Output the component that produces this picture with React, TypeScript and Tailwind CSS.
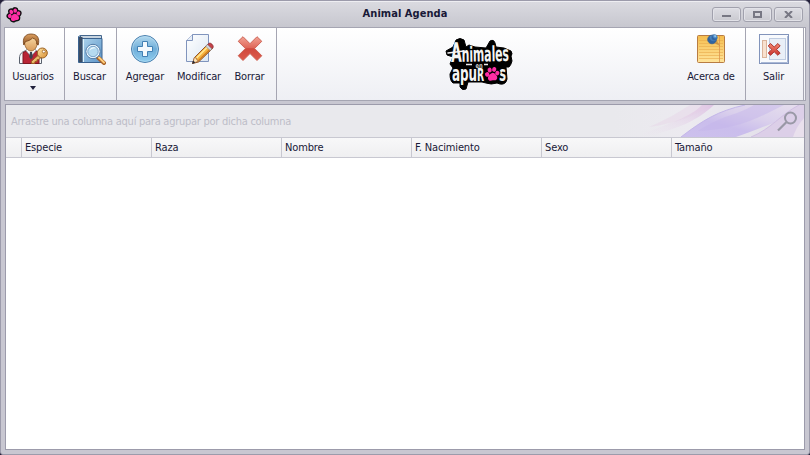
import type { ReactNode } from "react";

const PAW = (
  <>
    <ellipse cx="3.2" cy="8" rx="2.2" ry="2.3" transform="rotate(-25 3.2 8)" />
    <ellipse cx="6" cy="3.900" rx="2.100" ry="2.500" transform="rotate(-8 6 3.9)" />
    <ellipse cx="10.600" cy="3.600" rx="2.100" ry="2.500" transform="rotate(18 10.6 3.6)" />
    <ellipse cx="13.400" cy="7.500" rx="2.100" ry="2.300" transform="rotate(30 13.4 7.5)" />
    <path d="M8.300 6.900c2 0 2.800 1.500 3.800 2.800 1.400 1.500 1 4.400-1 4.800-1.300.2-1.800-.2-2.800-.1-1.200.1-2 .6-3.300 0-2-.9-1.700-3.400-.5-4.700C5.600 8.500 6.400 6.900 8.300 6.900z" />
  </>
);

function UsersIcon() {
  return (
    <svg width="32" height="32" viewBox="-1 0 32 32">
      <defs>
        <linearGradient id="face" x1="0" y1="0" x2="0" y2="1"><stop stopColor="#fbe0ad" /><stop offset="1" stopColor="#d99a58" /></linearGradient>
        <linearGradient id="hair" x1="0" y1="0" x2="0" y2="1"><stop stopColor="#dda060" /><stop offset="1" stopColor="#8d5323" /></linearGradient>
        <linearGradient id="key" x1="0" y1="0" x2="1" y2="1"><stop stopColor="#ffe7a6" /><stop offset="1" stopColor="#d78d32" /></linearGradient>
      </defs>
      <path d="M1.500 30.500V25c0-4 2.500-6.500 7-7.500h8c4.500 1 7 3.500 7 7.500v5.500z" fill="#f5f7fa" stroke="#59616d" />
      <path d="M5 30.500V19.700l3.500-1.900 4.500 6 4.500-6 3.500 1.900v10.800z" fill="#b82435" stroke="#7e1722" />
      <path d="M8 17.500l5 6 5-6-1-2H9z" fill="#fff" stroke="#8b95a2" strokeWidth=".8" />
      <path d="M12 19h2l.8 5-1.800 2.500-1.800-2.500z" fill="#3c4450" />
      <path d="M6.500 8c0-4 2.500-6 6.500-6s6.500 2.500 6.500 6.500c0 5-2.800 9.500-6.500 9.500s-6.500-4.500-6.500-9z" fill="url(#face)" stroke="#9c6632" strokeWidth=".9" />
      <path d="M5.800 12C4.300 6 6.500 1 13 1s9 4.500 7.200 11l-1.500-1c.3-3-1-5-4.200-6-2.100 2.200-4.500 3-7 3.500z" fill="url(#hair)" stroke="#754118" strokeWidth=".8" />
      <path d="M21.500 21.200l-8 7 .2 2.300 3-.1.300-1.800 1.900-.1.200-1.800 1.800-.1 2.500-2.600z" fill="url(#key)" stroke="#9b6020" />
      <circle cx="24.300" cy="20" r="5" fill="url(#key)" stroke="#9b6020" />
      <circle cx="25.800" cy="18.500" r="1.500" fill="#fff" stroke="#9b6020" strokeWidth=".8" />
    </svg>
  );
}

function SearchIcon() {
  return (
    <svg width="32" height="32" viewBox="-1 0 32 32">
      <defs>
        <linearGradient id="book" x1="0" y1="0" x2="1" y2="1"><stop stopColor="#b9dcf1" /><stop offset="1" stopColor="#5b94c8" /></linearGradient>
      </defs>
      <path d="M5.500 2.500h21v3h-21z" fill="#f6fafd" stroke="#45678d" />
      <path d="M6 4h20" stroke="#98aec2" />
      <path d="M3.500 3.500l2-1v3h21.500v24H3.500z" fill="url(#book)" stroke="#3a628f" />
      <path d="M4 4h3.500v25H4z" fill="#3c4d65" />
      <path d="M8.500 6v23" stroke="#e0f3fc" />
      <path d="M23 24.500l6 5.500" stroke="#a76127" strokeWidth="4" strokeLinecap="round" />
      <path d="M24 24.500l5 5" stroke="#ffcd7b" strokeWidth="2" strokeLinecap="round" />
      <circle cx="18" cy="18.500" r="7.200" fill="#edf8ff" stroke="#527aa5" />
      <circle cx="18" cy="18.500" r="5.200" fill="#b5daf0" stroke="#7ba5ca" />
      <path d="M14.500 18c.3-4 5-5 6.800-2.500C18 15 16 16 14.500 18z" fill="#f4fcff" />
    </svg>
  );
}

function AddIcon() {
  return (
    <svg width="32" height="32" viewBox="0 0 32 32">
      <defs>
        <linearGradient id="add" x1="0" y1="0" x2="0" y2="1"><stop stopColor="#b4daef" /><stop offset=".5" stopColor="#70aed9" /><stop offset="1" stopColor="#8fcef0" /></linearGradient>
      </defs>
      <circle cx="16" cy="16" r="13.500" fill="url(#add)" stroke="#4a7fae" />
      <circle cx="16" cy="16" r="12.500" fill="none" stroke="#b9def1" strokeOpacity=".6" />
      <path d="M13.500 8.500h5v5h5v5h-5v5h-5v-5h-5v-5h5z" fill="#f3f9fd" stroke="#4180b4" strokeLinejoin="round" />
    </svg>
  );
}

function EditIcon() {
  return (
    <svg width="32" height="32" viewBox="0 0 32 32">
      <defs>
        <linearGradient id="paper" x1="0" y1="0" x2="1" y2="1"><stop stopColor="#fff" /><stop offset="1" stopColor="#dbe6f2" /></linearGradient>
      </defs>
      <path d="M9.500 1.500h16v27h-22V7.500z" fill="url(#paper)" stroke="#8094bd" />
      <path d="M9.500 1.500v6h-6" fill="#e7eef7" stroke="#8094bd" />
      <path d="M9.500 30.500l2-6L25 11l4.500 4.500L15.500 29z" fill="#f6b13d" stroke="#8e552e" />
      <path d="M13 24.500L25.500 12l1.200 1L14.200 25.600z" fill="#ffe693" />
      <path d="M15 27.300L28 14.500l1 1L16 28z" fill="#cc7b20" />
      <path d="M24.500 11.500l1.700-1.300c1.500-.6 4.500 2 4 4l-1.700 1.900z" fill="#c5424a" stroke="#8c3435" strokeWidth=".8" />
      <path d="M22.700 13.200l1.700-1.700 4.400 4.500-1.600 1.500z" fill="#d6d9df" stroke="#838792" strokeWidth=".6" />
      <path d="M9.500 30.500l1.900-6 1.900.7.700 1.900 1.700.9z" fill="#ffe3b3" stroke="#8e552e" strokeWidth=".6" />
      <path d="M9.200 30.900l.9-3.300 2.200 1.900z" fill="#252936" />
    </svg>
  );
}

function DeleteIcon() {
  return (
    <svg width="32" height="32" viewBox="0 0 32 32">
      <defs>
        <linearGradient id="del" x1="0" y1="0" x2="0" y2="1"><stop stopColor="#f2a394" /><stop offset=".48" stopColor="#df6658" /><stop offset=".5" stopColor="#cf493d" /><stop offset="1" stopColor="#dd5a4b" /></linearGradient>
      </defs>
      <path d="M9 3.700l7 7 7-7 4.800 4.600-7.200 7.200 7.200 7.200-4.800 4.800-7-7-7 7-4.800-4.800 7.200-7.200-7.200-7.200z" fill="url(#del)" stroke="#cd6254" strokeLinejoin="round" />
    </svg>
  );
}

function AboutIcon() {
  return (
    <svg width="32" height="32" viewBox="0 0 32 32">
      <defs>
        <linearGradient id="note" x1="0" y1="0" x2="0" y2="1"><stop stopColor="#f5bd4d" /><stop offset="1" stopColor="#ffe49b" /></linearGradient>
        <radialGradient id="pin" cx=".65" cy=".25"><stop stopColor="#c6ebfd" /><stop offset=".4" stopColor="#5f9fd8" /><stop offset="1" stopColor="#2f64a2" /></radialGradient>
      </defs>
      <rect x="2.500" y="2.500" width="27" height="27" rx="1" fill="url(#note)" stroke="#b87c43" />
      <path d="M4 7.500h24M4 10.500h24M4 13.500h24M4 16.500h24M4 19.500h24M4 22.500h24M4 25.500h24" stroke="#e9ad4e" strokeOpacity=".65" />
      <path d="M24.500 3v26" stroke="#dc944e" strokeWidth=".8" />
      <path d="M17 9l8 4-5-9z" fill="#a76722" opacity=".45" />
      <circle cx="17" cy="6.500" r="4.300" fill="url(#pin)" stroke="#365f91" strokeWidth=".8" />
      <circle cx="19.300" cy="4.500" r="3" fill="url(#pin)" stroke="#4679ae" strokeWidth=".6" />
    </svg>
  );
}

function ExitIcon() {
  return (
    <svg width="32" height="32" viewBox="0 0 32 32">
      <defs>
        <linearGradient id="exit" x1="0" y1="0" x2="0" y2="1"><stop stopColor="#f58b73" /><stop offset="1" stopColor="#c82f2c" /></linearGradient>
      </defs>
      <rect x="1.500" y="1.500" width="29" height="29" fill="#f8fafd" stroke="#8294bb" />
      <path d="M3 29.500h26.500V3" fill="none" stroke="#a9b8d6" />
      <rect x="11.500" y="5.500" width="16" height="21" fill="#e9eff7" stroke="#bfcce1" />
      <rect x="4.500" y="7.500" width="4" height="17" fill="#f8e1cf" stroke="#dab49b" />
      <path d="M12.500 10.500l3.700 3.500 3.700-3.500 2.300 2.500-3.700 3.500 3.700 3.500-2.300 2.300-3.700-3.500-3.700 3.500-2.300-2.300 3.700-3.500-3.700-3.500z" fill="url(#exit)" stroke="#ac3630" strokeLinejoin="round" />
    </svg>
  );
}

function Logo() {
  return (
    <svg width="71" height="56" viewBox="0 0 71 56" className="font-['DejaVu_Sans_Condensed','DejaVu_Sans',sans-serif] font-bold">
      <path
        d="M2 15L9 11L12 4Q16 1 20 4L22 11L25 9L31 11L42 12L46 5Q50 3 51 7L52 11L60 12L67 15Q69 18 67 20L68 25Q67 29 65 31L62 31L63 43Q62 49 56 48L53 47Q47 49 42 47L38 46L24 46L22 53Q18 55 16 51L16 47L9 47Q6 45 6 38L9 32L6 28L9 21L3 19z"
        fill="#000" stroke="#000" strokeWidth="1" strokeLinejoin="round"
      />
      <path d="M4 17l16-2" stroke="#f4f4f4" strokeWidth="1.600" strokeLinecap="round" />
      <path d="M22 28.500h6M40 28.500h4" stroke="#e8e8ea" strokeWidth="1.500" />
      <g fill="#f4f4f4">
        <text x="7" y="26" fontSize="21" textLength="58" lengthAdjust="spacingAndGlyphs" transform="rotate(-1 6 26)"><tspan fontSize="27">A</tspan>nimales</text>
        <text x="31.500" y="31.500" fontSize="7" textLength="7" lengthAdjust="spacingAndGlyphs" fill="#c8c8c8">en</text>
        <text x="8" y="45" fontSize="22" textLength="32" lengthAdjust="spacingAndGlyphs">apu<tspan fontSize="17">R</tspan></text>
        <text x="55" y="44.500" fontSize="22" textLength="7" lengthAdjust="spacingAndGlyphs">s</text>
      </g>
      <g transform="translate(40 30) rotate(-5 8 8)">
        <g fill="#000" stroke="#000" strokeWidth="2">{PAW}</g>
        <g fill="#ff2ea6">{PAW}</g>
      </g>
    </svg>
  );
}

function RibbonButton({ icon, label, width, menu }: { icon: ReactNode; label: string; width: string; menu?: boolean }) {
  return (
    <button className={`flex h-full ${width} shrink-0 flex-col items-center pt-[5px]`}>
      {icon}
      <span className="mt-1 h-4 whitespace-nowrap leading-4">{label}</span>
      {menu && (
        <svg width="6" height="4" viewBox="0 0 6 4" className="mt-[1px]"><path d="M0 0h6L3 4z" fill="#20203c" /></svg>
      )}
    </button>
  );
}

function WindowButton({ children }: { children: ReactNode }) {
  return (
    <button className="flex h-[15px] w-[29px] items-center justify-center rounded-[3px] border border-[#a1a1ad] bg-linear-to-b from-[#dedee4] to-[#c9c9d0] shadow-[inset_0_0_0_1px_#e2e2e8]">
      {children}
    </button>
  );
}

const group = "flex h-full border-r border-[#a5a5b2]";
const columns = ["Especie", "Raza", "Nombre", "F. Nacimiento", "Sexo", "Tamaño"];

export default function App() {
  return (
    <div className="h-[455px] w-[810px] overflow-hidden bg-[#24213a] font-['DejaVu_Sans_Condensed','DejaVu_Sans',sans-serif] text-[11px] tracking-[-0.15px] text-[#191937]">
      <div className="flex h-full flex-col rounded-t-[6px] rounded-b-[3px] border border-[#9c9bab] bg-[#c8c7d1] px-[3px] pb-1">
        <header className="-mx-[3px] flex h-[26px] shrink-0 items-center rounded-t-[5px] border-t border-[#eeeef2] bg-linear-to-b from-[#dadae0] to-[#c7c7cf] px-[5px]">
          <div className="w-[94px]">
            <svg width="16" height="16" viewBox="0 0 16 16" className="overflow-visible">
              <g transform="rotate(-14 8 8) translate(.9 .9) scale(.88)">
                <g fill="#101010" stroke="#101010" strokeWidth="3">{PAW}</g>
                <g fill="#ff2ea6">{PAW}</g>
              </g>
            </svg>
          </div>
          <h1 className="flex-1 text-center text-[11px] font-bold tracking-[0.05px]">Animal Agenda</h1>
          <div className="flex w-[94px] justify-end gap-[2px] pb-[1px] pr-[1px]">
            <WindowButton><span className="mt-[4px] h-[2px] w-[9px] bg-[#777783]" /></WindowButton>
            <WindowButton><span className="h-[7px] w-[9px] border-2 border-[#777783]" /></WindowButton>
            <WindowButton>
              <svg width="9" height="7" viewBox="0 0 9 7"><path d="M1 0l7 7M8 0L1 7" stroke="#777783" strokeWidth="2" /></svg>
            </WindowButton>
          </div>
        </header>

        <nav className="flex h-[74px] shrink-0 border border-[#a5a5b2] bg-linear-to-b from-white to-[#eeeff4] pr-[1px]">
          <div className={`${group} w-[60px]`}><RibbonButton icon={<UsersIcon />} label="Usuarios" width="w-[56px]" menu /></div>
          <div className={`${group} w-[52px]`}><RibbonButton icon={<SearchIcon />} label="Buscar" width="w-[49px]" /></div>
          <div className={`${group} w-[160px]`}>
            <RibbonButton icon={<AddIcon />} label="Agregar" width="w-[56px]" />
            <RibbonButton icon={<EditIcon />} label="Modificar" width="w-[52px]" />
            <RibbonButton icon={<DeleteIcon />} label="Borrar" width="w-[49px]" />
          </div>
          <div className="flex flex-1 justify-center pt-[8px]"><Logo /></div>
          <div className={`${group} w-[64px]`}><RibbonButton icon={<AboutIcon />} label="Acerca de" width="w-[58px]" /></div>
          <div className={`${group} w-[58px]`}><RibbonButton icon={<ExitIcon />} label="Salir" width="w-[55px]" /></div>
        </nav>

        <main className="mx-[1px] mt-[3px] flex min-h-0 flex-1 flex-col border border-[#9c9bab] bg-white">
          <section className="relative flex h-[32px] shrink-0 items-center bg-[#e9e9ed] pl-[5px]">
            <span className="pt-[3px] tracking-[-0.26px] text-[#bdbdc8]">Arrastre una columna aquí para agrupar por dicha columna</span>
            <svg width="190" height="32" viewBox="0 0 190 32" className="absolute right-0 top-0">
              <defs>
                <linearGradient id="bg"><stop stopColor="#e9e9ed" /><stop offset=".4" stopColor="#eceaf0" /><stop offset="1" stopColor="#dfdbe7" /></linearGradient>
                <linearGradient id="violet" x1="0" y1="1" x2="1" y2="0"><stop stopColor="#cdc1ed" /><stop offset=".35" stopColor="#cabdec" /><stop offset=".6" stopColor="#dad0ec" /><stop offset="1" stopColor="#e6deed" /></linearGradient>
                <linearGradient id="pink" x1="0" y1="1" x2="1" y2="0"><stop stopColor="#ece8ef" stopOpacity="0" /><stop offset="1" stopColor="#dfc4e4" /></linearGradient>
              </defs>
              <path d="M0 0h190v32H0z" fill="url(#bg)" />
              <path d="M20 32C55 19 78 11 88 0h12C84 15 65 24 30 32z" fill="url(#pink)" />
              <path d="M35 22C56 13 66 6 76 0h20C78 12 63 18 35 22z" fill="#e4cee6" opacity=".35" />
              <path d="M67 32C89 15 104 6 131 0h59v10C165 14 140 26 122 32z" fill="url(#violet)" />
              <path d="M67 32C89 15 104 6 131 0" fill="none" stroke="#c3b6e9" />
              <path d="M84 26C112 8 120 12 140 0h30C145 12 127 24 84 26z" fill="#c3b3ea" opacity=".45" />
              <path d="M137 32C157 24 166 10 185 0h5v32z" fill="#dccfe8" />
              <path d="M137 32C157 24 166 10 185 0" fill="none" stroke="#d0bfe3" />
              <path d="M179 32c3-9 7-14 11-19v19z" fill="#e9e0ed" />
              <circle cx="176.500" cy="13" r="5.500" fill="none" stroke="#9998a6" strokeWidth="2" />
              <path d="M172.300 17.200l-8.300 8.300" stroke="#9998a6" strokeWidth="2.200" />
            </svg>
          </section>
          <div className="flex h-[21px] shrink-0 border-y border-[#c8c8d1] bg-linear-to-b from-[#f8f8f9] to-[#efeff1]">
            <div className="w-4 border-r border-[#c8c8d1]" />
            {columns.map((name) => (
              <div key={name} className="w-[130px] border-r border-[#c8c8d1] pl-[3px] leading-[19px] last:w-auto last:flex-1 last:border-r-0">{name}</div>
            ))}
          </div>
          <div className="flex-1 bg-white" />
        </main>
      </div>
    </div>
  );
}
